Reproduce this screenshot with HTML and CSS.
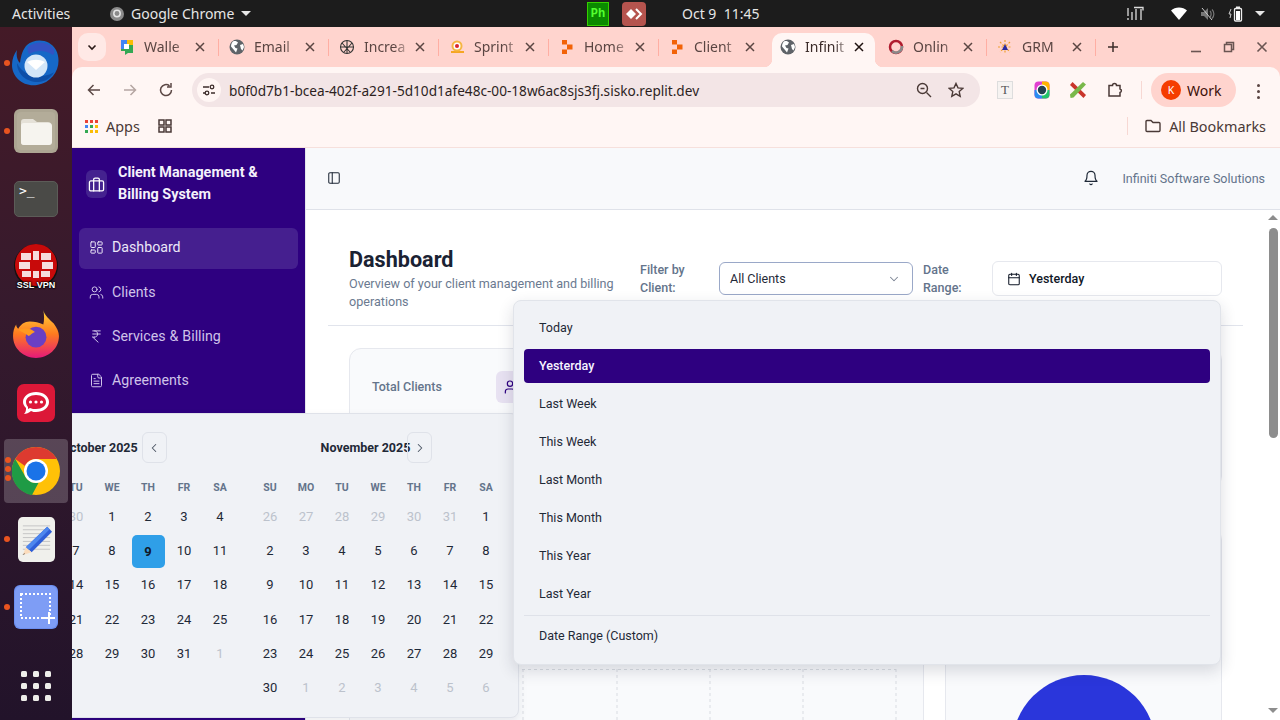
FILE: index.html
```html
<!DOCTYPE html>
<html lang="en">
<head>
<meta charset="utf-8">
<title>Client Management &amp; Billing System</title>
<link rel="stylesheet" href="styles.css">
</head>
<body>
<svg class="defs" width="0" height="0" aria-hidden="true">
  <symbol id="globe" viewBox="0 0 16 16"><circle cx="8" cy="8" r="7.5" fill="#5f6368"/><path d="M4 2.500c2-1 4 0 5 1L7.500 6 5 6.500 6.500 9l2 .5L7 13.500 5 11 2 7.500C2 5 3 3.500 4 2.500ZM11 6l3-1 1 3-1.500 3.500L12 10Z" fill="#fff"/></symbol>
  <symbol id="replit" viewBox="0 0 16 16"><path d="M3 1h5v4.500H3ZM8 5.500h5.500v5H8ZM3 10.500h5V15H3Z" fill="#f26207"/></symbol>
  <symbol id="close" viewBox="0 0 12 12"><path d="M2 2l8 8M10 2l-8 8" stroke="currentColor" stroke-width="1.500" fill="none"/></symbol>
</svg>
<div class="screen">
  <header class="topbar">
    <span class="tb-activities">Activities</span>
    <span class="tb-app">
      <svg class="i14" viewBox="0 0 14 14"><circle cx="7" cy="7" r="7" fill="#8a8a8a"/><circle cx="7" cy="6.500" r="3.200" fill="none" stroke="#e6e6e6" stroke-width="1.500"/></svg>
      Google Chrome
      <i class="caret"></i>
    </span>
    <span class="tb-ph">Ph</span>
    <span class="tb-any"><svg width="18" height="12" viewBox="0 0 18 12"><path d="M1 6l5-5 5 5-5 5Z" fill="#fff"/><path d="M11 1l5 5-5 5" fill="none" stroke="#fff" stroke-width="2"/></svg></span>
    <span class="tb-clock">Oct 9&nbsp;&nbsp;11:45</span>
    <span class="tb-tray">
      <svg width="18" height="16" viewBox="0 0 18 16"><path d="M2 2v8M2 12v2M6 6v8M10 3v11M15 3v11M8 1.500h9v3" fill="none" stroke="#ddd" stroke-width="1.300"/></svg>
      <svg class="tray-wifi" width="16" height="13" viewBox="0 0 16 13"><path d="M0 3.500C4-.5 12-.5 16 3.500L8 13Z" fill="#fff"/></svg>
      <svg width="15" height="14" viewBox="0 0 15 14"><path d="M1 5h3l4-4v12L4 9H1Z" fill="#777"/><path d="M10 4c1.500 1.500 1.500 4.500 0 6M12 2.500c2.500 2.500 2.500 6.500 0 9" fill="none" stroke="#777" stroke-width="1.200"/><path d="M2 1l10 12" stroke="#ccc" stroke-width="1"/></svg>
      <svg width="16" height="16" viewBox="0 0 16 16"><path d="M3 3L1 8h2l-1 4" fill="none" stroke="#ccc" stroke-width="1"/><rect x="6.500" y="2.500" width="7" height="12.500" rx="1" fill="none" stroke="#eee" stroke-width="1.300"/><rect x="8" y="0.500" width="4" height="2" fill="#eee"/><rect x="8" y="5" width="4" height="9" fill="#fff"/></svg>
      <i class="caret"></i>
    </span>
  </header>

  <div class="desk">
    <nav class="dock">
      <div class="dock-item has-dot">
        <svg class="dock-bird" viewBox="0 0 48 48"><path d="M15 6C23-1 38 0 44 11c7 14-1 32-19 35C11 48 0 38 0 26c0-6 2-11 5-15-1 5 0 10 3 13C9 16 11 10 15 6Z" fill="#1668c7"/><path d="M16 8c7-6 18-6 24 0 3 3 3 6 1 8-7-5-17-5-24-1-1-2-2-5-1-7Z" fill="#3353c4"/><path d="M5 24c0 11 9 19 21 19 7 0 13-4 16-10-8 6-29 8-37-9Z" fill="#0d4fa8"/><circle cx="24" cy="27" r="11.500" fill="#d3e6f8"/><path d="M15 23c6-3 12-3 18 0l-9 8Z" fill="#fff"/></svg>
      </div>
      <div class="dock-item has-dot">
        <svg class="dock-icon" viewBox="0 0 44 44"><rect width="44" height="44" rx="6" fill="#aca592"/><rect x="3" y="3" width="38" height="38" rx="4" fill="#b3ac99"/><path d="M7 13a3 3 0 0 1 3-3h9l4 3h11a3 3 0 0 1 3 3v17a3 3 0 0 1-3 3H10a3 3 0 0 1-3-3Z" fill="#e5e1d8"/><rect x="7" y="14" width="31" height="22" rx="3" fill="#f6f4ef"/></svg>
      </div>
      <div class="dock-item">
        <div class="term">&gt;_</div>
      </div>
      <div class="dock-item">
        <div class="vpn">
          <svg class="vpn-ball" viewBox="0 0 44 44"><circle cx="22" cy="22" r="22" fill="#111"/><circle cx="22" cy="21" r="21" fill="#c80a0a"/><path d="M7 9h10v7H7ZM19 7h6v9h-6ZM27 9h10v7H27ZM5 18h11v7H5ZM28 18h11v7H28ZM8 27h9v6H8ZM19 27h6v7h-6ZM27 27h9v6h-9Z" fill="#f6dcdc"/></svg>
          <span class="vpn-label">SSL VPN</span>
        </div>
      </div>
      <div class="dock-item">
        <svg class="dock-fox" viewBox="0 0 44 46"><defs><linearGradient id="ff" x1="0" y1="0" x2="0" y2="1"><stop offset="0" stop-color="#ffd43a"/><stop offset=".5" stop-color="#ff7a1f"/><stop offset="1" stop-color="#e5197a"/></linearGradient></defs><path d="M29 0c1 5 6 9 10 13 3 4 5 8 5 12 0 12-10 21-22 21S0 37 0 25c0-4 1-8 3-11 0 2 1 3 2 4 2-4 6-7 11-7 5 0 9 1 13 3 1-4 1-9 0-14Z" fill="url(#ff)"/><circle cx="22" cy="26" r="10" fill="#6a3fc4"/><path d="M5 19c5-2 12-2 16 2-3 1-4 3-6 4-4-3-7-4-10-6Z" fill="#ff9a1f"/></svg>
      </div>
      <div class="dock-item">
        <svg class="dock-rocket" viewBox="0 0 38 38"><rect width="38" height="38" rx="7" fill="#dc1838"/><path d="M6 18c0-6 6-10 13-10s13 4 13 10-6 10-13 10c-2 0-3 0-5-1-2 2-5 3-7 3 2-2 2-4 2-6-2-2-3-4-3-6Z" fill="#fff"/><path d="M9 18c0-4 4-7 10-7s10 3 10 7-4 7-10 7c-2 0-4 0-6-1l-2 1v-2c-1-1-2-3-2-5Z" fill="#dc1838"/><circle cx="13.500" cy="18" r="1.600" fill="#fff"/><circle cx="19" cy="18" r="1.600" fill="#fff"/><circle cx="24.500" cy="18" r="1.600" fill="#fff"/></svg>
      </div>
      <div class="dock-item is-running">
        <span class="dots"><i></i><i></i><i></i></span>
        <svg class="dock-chrome" viewBox="0 0 48 48"><circle cx="24" cy="24" r="24" fill="#ffc107"/><path d="M24 0a24 24 0 0 1 20.800 12H24a12 12 0 0 0-11 7L3.200 12A24 24 0 0 1 24 0Z" fill="#dd3a30"/><path d="M3.200 12l10.400 18a12 12 0 0 0 13 5.700L20 48A24 24 0 0 1 3.200 12Z" fill="#1f9b45"/><circle cx="24" cy="24" r="12" fill="#fff"/><circle cx="24" cy="24" r="9.500" fill="#1a73e8"/></svg>
      </div>
      <div class="dock-item has-dot">
        <svg class="dock-gedit" viewBox="0 0 38 46"><rect width="38" height="46" rx="5" fill="#f0f0ec"/><path d="M5 9h28M5 13h28M5 17h28M5 21h28M5 25h28M5 29h28M5 33h28" stroke="#c4c4c4"/><path d="M30 10l5 5-21 21-6-5Z" fill="#2f5fd8"/><path d="M30 10l2.500 2.500L11 34l-3-3Z" fill="#4d86ee"/><path d="M8 31l6 5-9 3Z" fill="#fbdcbc"/><path d="M6.500 37l-2 2 2.500-1Z" fill="#333"/></svg>
      </div>
      <div class="dock-item has-dot">
        <svg class="dock-icon" viewBox="0 0 44 44"><rect width="44" height="44" rx="6" fill="#6c8ff0"/><rect x="1" y="1" width="42" height="42" rx="6" fill="#7e9df5"/><rect x="7" y="9" width="29" height="24" fill="none" stroke="#fff" stroke-width="2" stroke-dasharray="2 2"/><path d="M35 27v12M29 33h12" stroke="#fff" stroke-width="2"/></svg>
      </div>
      <div class="dock-grid"><i></i><i></i><i></i><i></i><i></i><i></i><i></i><i></i><i></i></div>
    </nav>

    <div class="browser">
      <div class="tabstrip">
        <button class="tab-menu"><svg class="i12" viewBox="0 0 12 12"><path d="M2.500 4.500L6 8l3.500-3.500" fill="none" stroke="#2a1a18" stroke-width="1.600"/></svg></button>
        <div class="tab sep">
          <svg class="favicon" viewBox="0 0 16 16"><path d="M2 1h6v4H5v5H2Z" fill="#4285f4"/><path d="M8 1h6v5h-4V5H8Z" fill="#fbbc04"/><path d="M14 6v8H9l-3 2v-4H2v-2h8V6Z" fill="#34a853"/><rect x="5" y="5" width="5" height="5" fill="#fff"/></svg>
          <span class="tab-title">Walle</span>
          <svg class="tab-x" viewBox="0 0 12 12"><use href="#close"/></svg>
        </div>
        <div class="tab sep">
          <svg class="favicon" viewBox="0 0 16 16"><use href="#globe"/></svg>
          <span class="tab-title">Email</span>
          <svg class="tab-x" viewBox="0 0 12 12"><use href="#close"/></svg>
        </div>
        <div class="tab sep">
          <svg class="favicon" viewBox="0 0 16 16"><g fill="none" stroke="#333" stroke-width="1.100"><circle cx="8" cy="8" r="6.500"/><path d="M3 4l8 9M13 4L5 13M1.500 8h13M8 1.500v13"/></g></svg>
          <span class="tab-title">Increa</span>
          <svg class="tab-x" viewBox="0 0 12 12"><use href="#close"/></svg>
        </div>
        <div class="tab sep">
          <svg class="favicon" viewBox="0 0 16 16"><path d="M2 13h13" stroke="#f5a623" stroke-width="2"/><circle cx="8" cy="7" r="5.500" fill="#f5b642"/><circle cx="8" cy="7" r="3.500" fill="#fff"/><circle cx="8" cy="7" r="2" fill="#d9262c"/></svg>
          <span class="tab-title">Sprint</span>
          <svg class="tab-x" viewBox="0 0 12 12"><use href="#close"/></svg>
        </div>
        <div class="tab sep">
          <svg class="favicon" viewBox="0 0 16 16"><use href="#replit"/></svg>
          <span class="tab-title">Home</span>
          <svg class="tab-x" viewBox="0 0 12 12"><use href="#close"/></svg>
        </div>
        <div class="tab">
          <svg class="favicon" viewBox="0 0 16 16"><use href="#replit"/></svg>
          <span class="tab-title">Client</span>
          <svg class="tab-x" viewBox="0 0 12 12"><use href="#close"/></svg>
        </div>
        <div class="tab tab-active">
          <svg class="favicon" viewBox="0 0 16 16"><use href="#globe"/></svg>
          <span class="tab-title">Infinit</span>
          <svg class="tab-x" viewBox="0 0 12 12"><use href="#close"/></svg>
        </div>
        <div class="tab tab-narrow sep">
          <svg class="favicon" viewBox="0 0 16 16"><circle cx="8" cy="8" r="6" fill="none" stroke="#b01c2e" stroke-width="2.500"/><path d="M4 12a6 6 0 0 0 10-5" fill="none" stroke="#8a8a8a" stroke-width="2.500"/></svg>
          <span class="tab-title">Onlin</span>
          <svg class="tab-x" viewBox="0 0 12 12"><use href="#close"/></svg>
        </div>
        <div class="tab tab-narrow sep">
          <svg class="favicon" viewBox="0 0 16 16"><path d="M8 1v14M1 8h14M3 3l10 10M13 3L3 13" stroke="#f0a030" stroke-width="1.200" stroke-dasharray="2 1.500"/><path d="M8 5l3 6H5Z" fill="#2b2ba0"/></svg>
          <span class="tab-title">GRM</span>
          <svg class="tab-x" viewBox="0 0 12 12"><use href="#close"/></svg>
        </div>
        <svg class="tab-plus" viewBox="0 0 12 12"><path d="M6 1v10M1 6h10" stroke="#3d2c2a" stroke-width="1.500"/></svg>
        <div class="winctl">
          <svg class="i12" viewBox="0 0 12 12"><path d="M1 10.500h10" stroke="#6a5552" stroke-width="1.600"/></svg>
          <svg class="i12" viewBox="0 0 12 12"><path d="M3.500 3V1.500h7v7H9M1.500 3.500h7v7h-7Z" fill="none" stroke="#6a5552" stroke-width="1.500"/></svg>
          <svg class="i12" viewBox="0 0 12 12"><path d="M1.500 1.500l9 9M10.500 1.500l-9 9" stroke="#6a5552" stroke-width="1.600"/></svg>
        </div>
      </div>

      <div class="toolbar">
        <svg class="tool" viewBox="0 0 16 16"><path d="M14 8H2.500M7.500 3l-5 5 5 5" fill="none" stroke="#5c4845" stroke-width="1.500"/></svg>
        <svg class="tool" viewBox="0 0 16 16"><path d="M2 8h11.500M8.500 3l5 5-5 5" fill="none" stroke="#b5a5a2" stroke-width="1.500"/></svg>
        <svg class="tool" viewBox="0 0 16 16"><path d="M13.500 8A5.500 5.500 0 1 1 11.500 3.800M13 1v4H9" fill="none" stroke="#5c4845" stroke-width="1.500"/></svg>
        <div class="omnibox">
          <span class="site-info"><svg class="i14" viewBox="0 0 14 14"><path d="M1 4h6M9 10h4M1 10h2" stroke="#3d2c2a" stroke-width="1.400"/><circle cx="10" cy="4" r="1.800" fill="none" stroke="#3d2c2a" stroke-width="1.300"/><circle cx="5" cy="10" r="1.800" fill="none" stroke="#3d2c2a" stroke-width="1.300"/></svg></span>
          <span class="url">b0f0d7b1-bcea-402f-a291-5d10d1afe48c-00-18w6ac8sjs3fj.sisko.replit.dev</span>
          <svg class="omni-zoom" viewBox="0 0 16 16"><circle cx="6.500" cy="6.500" r="5" fill="none" stroke="#4a3936" stroke-width="1.400"/><path d="M10.500 10.500l4.500 4.500M4.500 6.500h4" stroke="#4a3936" stroke-width="1.400"/></svg>
          <svg class="omni-star" viewBox="0 0 16 16"><path d="M8 1.500l2 4.400 4.800.5-3.600 3.200 1 4.700L8 11.900l-4.200 2.400 1-4.700L1.200 6.400 6 5.900Z" fill="none" stroke="#4a3936" stroke-width="1.400"/></svg>
        </div>
        <div class="exts">
          <span class="ext-t">T</span>
          <svg class="ext-ring" viewBox="0 0 16 18"><rect x="0.500" y="0.500" width="15" height="17" rx="4" fill="#e13fd0"/><path d="M8 .5h3.500a4 4 0 0 1 4 4V9H8Z" fill="#ffb400"/><path d="M15.500 9v4.500a4 4 0 0 1-4 4H8V9Z" fill="#21c46a"/><path d="M8 17.500H4.500a4 4 0 0 1-4-4V9H8Z" fill="#2a8cf0"/><circle cx="8" cy="9" r="5.500" fill="#fff"/><circle cx="8" cy="9" r="4.200" fill="#23404f"/></svg>
          <svg class="i16" viewBox="0 0 16 16"><path d="M2.500 0L16 13l-2.500 3L0 3Z" fill="#c9352b"/><path d="M13 0L16 2.500 3.500 15.500.5 16 0 12.500Z" fill="#79b84a"/></svg>
          <svg class="i16" viewBox="0 0 16 16"><path d="M2 3.500h3.500a2 2 0 0 1 4 0H13v3.500a1.800 1.800 0 0 1 0 3.500V14H2Z" fill="none" stroke="#4a3936" stroke-width="1.500"/></svg>
        </div>
        <span class="tool-sep"></span>
        <div class="profile"><span class="avatar">K</span><span class="profile-name">Work</span></div>
        <span class="kebab"><i></i><i></i><i></i></span>
      </div>

      <div class="bookmarks">
        <span class="apps-grid"><i class="r"></i><i class="r"></i><i class="r"></i><i class="b"></i><i class="g"></i><i class="y"></i><i class="g"></i><i class="y"></i><i class="y"></i></span>
        <span class="bm-text">Apps</span>
        <svg class="bm-groups" viewBox="0 0 14 14"><path d="M1 1h5v5H1ZM8 1h5v5H8ZM1 8h5v5H1ZM8 8h5v5H8Z" fill="none" stroke="#4a3936" stroke-width="1.500"/></svg>
        <span class="bm-sep"></span>
        <svg class="bm-folder" viewBox="0 0 16 14"><path d="M1 2.500a1 1 0 0 1 1-1h4l2 2h6a1 1 0 0 1 1 1v7a1 1 0 0 1-1 1H2a1 1 0 0 1-1-1Z" fill="none" stroke="#4a3936" stroke-width="1.400"/></svg>
        <span class="bm-text">All Bookmarks</span>
      </div>

      <div class="app">
        <aside class="sidebar">
          <div class="brand">
            <span class="brand-icon"><svg class="lucide l17" viewBox="0 0 24 24"><rect x="2" y="7" width="20" height="14" rx="2"/><path d="M16 21V5a2 2 0 0 0-2-2h-4a2 2 0 0 0-2 2v16"/></svg></span>
            <span class="brand-name">Client Management &amp; Billing System</span>
          </div>
          <a class="nav-item nav-active"><svg class="lucide nav-icon" viewBox="0 0 24 24"><rect x="3" y="3" width="7" height="9" rx="1"/><rect x="14" y="3" width="7" height="5" rx="1"/><rect x="14" y="12" width="7" height="9" rx="1"/><rect x="3" y="16" width="7" height="5" rx="1"/></svg>Dashboard</a>
          <a class="nav-item"><svg class="lucide nav-icon" viewBox="0 0 24 24"><path d="M16 21v-2a4 4 0 0 0-4-4H6a4 4 0 0 0-4 4v2"/><circle cx="9" cy="7" r="4"/><path d="M22 21v-2a4 4 0 0 0-3-3.870"/><path d="M16 3.130a4 4 0 0 1 0 7.750"/></svg>Clients</a>
          <a class="nav-item"><svg class="lucide nav-icon" viewBox="0 0 24 24"><path d="M6 3h12M6 8h12M6 13l8.500 8M6 13h3M9 13c6.667 0 6.667-10 0-10"/></svg>Services &amp; Billing</a>
          <a class="nav-item"><svg class="lucide nav-icon" viewBox="0 0 24 24"><path d="M15 2H6a2 2 0 0 0-2 2v16a2 2 0 0 0 2 2h12a2 2 0 0 0 2-2V7Z"/><path d="M14 2v4a2 2 0 0 0 2 2h4M10 9H8M16 13H8M16 17H8"/></svg>Agreements</a>
        </aside>
        <div class="main">
          <div class="app-head">
            <svg class="lucide l14 head-panel" viewBox="0 0 24 24"><rect x="3" y="3" width="18" height="18" rx="2"/><path d="M9 3v18"/></svg>
            <svg class="lucide l16 head-bell" viewBox="0 0 24 24"><path d="M6 8a6 6 0 0 1 12 0c0 7 3 9 3 9H3s3-2 3-9"/><path d="M10.300 21a1.940 1.940 0 0 0 3.400 0"/></svg>
            <span class="head-org">Infiniti Software Solutions</span>
          </div>
          <div class="content">
            <div class="page">
              <div class="page-head">
                <div class="page-title">
                  <h1>Dashboard</h1>
                  <p>Overview of your client management and billing operations</p>
                </div>
                <div class="filters">
                  <label class="filter-label l-client">Filter by Client:</label>
                  <div class="select">All Clients<svg class="lucide l14 sel-chev" viewBox="0 0 24 24"><path d="m6 9 6 6 6-6"/></svg></div>
                  <label class="filter-label l-date">Date Range:</label>
                  <div class="date-btn"><svg class="lucide l14" viewBox="0 0 24 24"><path d="M8 2v4M16 2v4M3 10h18"/><rect x="3" y="4" width="18" height="18" rx="2"/></svg>Yesterday</div>
                </div>
              </div>
              <div class="page-body">
                <div class="stats">
                  <div class="card stat">
                    <span class="stat-label">Total Clients</span>
                    <span class="stat-icon"><svg class="lucide l16" viewBox="0 0 24 24"><path d="M16 21v-2a4 4 0 0 0-4-4H6a4 4 0 0 0-4 4v2"/><circle cx="9" cy="7" r="4"/></svg></span>
                  </div>
                  <div class="card stat"></div>
                  <div class="card stat"></div>
                  <div class="card stat"></div>
                </div>
                <div class="charts">
                  <div class="card chart">
                    <svg class="chart-grid" viewBox="0 0 530 120"><path d="M151 0v120M245 0v120M338 0v120M431 0v120M524 0v120M60 .5h464" fill="none" stroke="#d9dce2" stroke-dasharray="3 3"/></svg>
                  </div>
                  <div class="card pie">
                    <svg class="pie-svg" viewBox="0 0 144 144"><circle cx="72" cy="72" r="72" fill="#2a36db"/></svg>
                  </div>
                </div>
              </div>
            </div>
            <div class="scrollbar">
              <i class="sb-up"></i>
              <i class="sb-thumb"></i>
              <i class="sb-down"></i>
            </div>
          </div>
        </div>
      </div>
    </div>
  </div>

  <div class="calendar">
    <section class="month">
      <div class="month-head mh-oct">
        <span class="month-name">October 2025</span>
        <span class="month-nav"><svg class="lucide l14" viewBox="0 0 24 24"><path d="m15 18-6-6 6-6"/></svg></span>
      </div>
      <div class="weekdays"><span>SU</span><span>MO</span><span>TU</span><span>WE</span><span>TH</span><span>FR</span><span>SA</span></div>
      <div class="days">
        <span class="out">28</span><span class="out">29</span><span class="out">30</span><span>1</span><span>2</span><span>3</span><span>4</span>
        <span>5</span><span>6</span><span>7</span><span>8</span><span class="today">9</span><span>10</span><span>11</span>
        <span>12</span><span>13</span><span>14</span><span>15</span><span>16</span><span>17</span><span>18</span>
        <span>19</span><span>20</span><span>21</span><span>22</span><span>23</span><span>24</span><span>25</span>
        <span>26</span><span>27</span><span>28</span><span>29</span><span>30</span><span>31</span><span class="out">1</span>
      </div>
    </section>
    <section class="month">
      <div class="month-head mh-nov">
        <span class="month-name">November 2025</span>
        <span class="month-nav nav-over"><svg class="lucide l14" viewBox="0 0 24 24"><path d="m9 18 6-6-6-6"/></svg></span>
      </div>
      <div class="weekdays"><span>SU</span><span>MO</span><span>TU</span><span>WE</span><span>TH</span><span>FR</span><span>SA</span></div>
      <div class="days">
        <span class="out">26</span><span class="out">27</span><span class="out">28</span><span class="out">29</span><span class="out">30</span><span class="out">31</span><span>1</span>
        <span>2</span><span>3</span><span>4</span><span>5</span><span>6</span><span>7</span><span>8</span>
        <span>9</span><span>10</span><span>11</span><span>12</span><span>13</span><span>14</span><span>15</span>
        <span>16</span><span>17</span><span>18</span><span>19</span><span>20</span><span>21</span><span>22</span>
        <span>23</span><span>24</span><span>25</span><span>26</span><span>27</span><span>28</span><span>29</span>
        <span>30</span><span class="out">1</span><span class="out">2</span><span class="out">3</span><span class="out">4</span><span class="out">5</span><span class="out">6</span>
      </div>
    </section>
  </div>

  <div class="range-menu">
    <div class="range-item">Today</div>
    <div class="range-item range-selected">Yesterday</div>
    <div class="range-item">Last Week</div>
    <div class="range-item">This Week</div>
    <div class="range-item">Last Month</div>
    <div class="range-item">This Month</div>
    <div class="range-item">This Year</div>
    <div class="range-item">Last Year</div>
    <div class="range-sep"></div>
    <div class="range-item range-last">Date Range (Custom)</div>
  </div>
</div>
</body>
</html>
```

FILE: styles.css
```css
* { box-sizing: border-box; }
html, body { margin: 0; height: 100%; overflow: hidden; }
body { font-family: Roboto, "Liberation Sans", sans-serif; background: #fff; color: #1f2937; }
.defs { position: absolute; }
i { display: block; }
button { border: 0; padding: 0; }

.screen { position: relative; width: 1280px; height: 720px; display: flex; flex-direction: column; overflow: hidden; }

.i12 { width: 12px; height: 12px; display: block; flex: none; }
.i14 { width: 14px; height: 14px; display: block; flex: none; }
.i16 { width: 16px; height: 16px; display: block; flex: none; }
.lucide { fill: none; stroke: currentColor; stroke-width: 1.800; stroke-linecap: round; stroke-linejoin: round; display: block; flex: none; }
.l14 { width: 14px; height: 14px; }
.l16 { width: 16px; height: 16px; }
.l17 { width: 17px; height: 17px; }

/* Top bar */
.topbar { height: 27px; flex: none; background: #1c1c1c; color: #e6e6e6; display: flex; align-items: center; font: 14px "Noto Sans", sans-serif; position: relative; z-index: 4; }
.tb-activities { margin-left: 12px; width: 98px; }
.tb-app { display: flex; align-items: center; gap: 7px; width: 477px; }
.caret { width: 0; height: 0; border-left: 5px solid transparent; border-right: 5px solid transparent; border-top: 5px solid #e6e6e6; }
.tb-ph { width: 22px; height: 24px; background: #0b8a00; border: 1px solid #35d000; color: #54ff30; font: 700 12px/22px "Liberation Mono", monospace; text-align: center; margin-right: 13px; }
.tb-any { width: 24px; height: 24px; border-radius: 4px; background: #b5544e; display: flex; align-items: center; justify-content: center; margin-right: 36px; }
.tb-clock { width: 82px; font-size: 14px; }
.tb-tray { margin-left: auto; display: flex; align-items: center; gap: 13px; margin-right: 15px; }
.tb-tray .caret { margin-left: -2px; }
.tray-wifi { margin-left: 14px; }

/* Dock */
.desk { flex: 1; min-height: 0; display: flex; }
.dock { position: relative; z-index: 3; width: 72px; flex: none; padding-top: 2px; background: linear-gradient(180deg, #441a27 0%, #361a2d 40%, #22132a 100%); }
.dock-item { position: relative; height: 68px; display: flex; align-items: center; justify-content: center; }
.has-dot::before { content: ""; position: absolute; left: 4px; top: 31px; width: 6px; height: 6px; border-radius: 50%; background: #e95420; }
.dock-icon { width: 44px; height: 44px; display: block; }
.dock-bird { width: 48px; height: 48px; display: block; }
.dock-fox { width: 46px; height: 48px; display: block; margin-top: -2px; }
.dock-rocket { width: 38px; height: 38px; display: block; }
.dock-gedit { width: 37px; height: 45px; display: block; }
.dock-chrome { width: 48px; height: 48px; display: block; }
.term { width: 44px; height: 36px; background: #4a4a47; border-radius: 5px; border: 1px solid #5c5c58; color: #fff; font: 13px/18px "DejaVu Sans Mono", monospace; padding-left: 4px; }
.vpn { position: relative; width: 46px; height: 46px; }
.vpn-ball { width: 44px; height: 44px; display: block; margin: 0 auto; }
.vpn-label { position: absolute; left: 0; right: 0; bottom: 0; text-align: center; font: 700 9px/10px "Liberation Sans", sans-serif; color: #fff; text-shadow: 0 0 2px #000, 0 0 2px #000, 0 0 2px #000; white-space: nowrap; }
.is-running { margin: 2px 4px; background: rgba(255, 255, 255, .2); border-radius: 4px; height: 64px; }
.dots { position: absolute; left: 1px; top: 18px; display: flex; flex-direction: column; gap: 3px; }
.dots i { width: 6px; height: 6px; border-radius: 50%; background: #e95420; }
.dock-grid { margin: 30px auto 0; width: 30px; display: grid; grid-template-columns: repeat(3, 6px); gap: 6px; justify-content: space-between; }
.dock-grid i { width: 6px; height: 6px; border-radius: 1.500px; background: #eeeeea; }

/* Browser chrome */
.browser { flex: 1; min-width: 0; display: flex; flex-direction: column; background: #ffd4ce; }
.tabstrip { height: 40px; flex: none; display: flex; align-items: flex-start; padding: 6px 0 0 6px; color: #5a4542; font: 14px "Noto Sans", sans-serif; }
.tab-menu { width: 28px; height: 28px; border-radius: 10px; background: #ffe9e6; display: flex; align-items: center; justify-content: center; margin-right: 3px; }
.tab { position: relative; width: 110px; height: 34px; flex: none; display: flex; align-items: center; padding: 0 13px 7px 10px; }
.tab-narrow { width: 109px; }
.tab.sep::after { content: ""; position: absolute; right: 0; top: 6px; width: 1.500px; height: 17px; background: #ffaea3; }
.favicon { width: 16px; height: 16px; flex: none; margin-right: 9px; }
.tab-title { flex: 1; min-width: 0; white-space: nowrap; -webkit-mask-image: linear-gradient(90deg, #000 60%, rgba(0, 0, 0, .25) 88%); mask-image: linear-gradient(90deg, #000 60%, rgba(0, 0, 0, .25) 88%); }
.tab-x { width: 12px; height: 12px; flex: none; color: #5a4542; }
.tab-active { width: 103px; margin: 0 3px; padding: 0 10px 7px 8px; background: #fff6f4; border-radius: 10px 10px 0 0; color: #3a2a28; }
.tab-active .tab-x { color: #1f1210; }
.tab-active::before, .tab-active::after { content: ""; position: absolute; bottom: 0; width: 8px; height: 8px; }
.tab-active::before { left: -8px; background: radial-gradient(circle at 0 0, transparent 8px, #fff6f4 8.500px); }
.tab-active::after { right: -8px; background: radial-gradient(circle at 100% 0, transparent 8px, #fff6f4 8.500px); }
.tab-plus { width: 12px; height: 12px; margin: 8px 0 0 11px; flex: none; }
.winctl { margin-left: auto; display: flex; gap: 21px; margin-right: 12px; margin-top: 8px; }

.toolbar { height: 40px; flex: none; background: #fff6f4; border-radius: 10px 10px 0 0; display: flex; align-items: flex-start; padding: 6px 0 0 14px; }
.tool { width: 16px; height: 16px; flex: none; margin: 9px 20px 0 0; display: block; }
.tool + .omnibox { margin-left: -2px; }
.omnibox { width: 788px; height: 34px; border-radius: 17px; background: #f3e5e6; display: flex; align-items: center; padding: 0 16px 0 5px; flex: none; }
.site-info { width: 24px; height: 24px; border-radius: 50%; background: #fff6f4; display: flex; align-items: center; justify-content: center; margin-right: 8px; flex: none; }
.url { flex: 1; font: 13.630px "Noto Sans", sans-serif; color: #2d1f1e; white-space: nowrap; }
.omni-zoom, .omni-star { width: 16px; height: 16px; flex: none; }
.omni-star { margin-left: 16px; }
.exts { display: flex; align-items: center; gap: 20.500px; height: 34px; margin-left: 17px; flex: none; }
.ext-t { width: 16px; height: 18px; background: #f6f3f1; border: 1px solid #ddd; color: #555; font: 13px/16px "Liberation Serif", serif; text-align: center; }
.ext-ring { width: 16px; height: 18px; display: block; flex: none; }
.tool-sep { width: 1.500px; height: 18px; margin: 8px 9px 0 18px; background: #f7d8d3; flex: none; }
.profile { width: 85px; height: 34px; border-radius: 17px; background: #ffd4ce; display: flex; align-items: center; flex: none; }
.avatar { width: 20px; height: 20px; border-radius: 50%; background: #f53c00; color: #fff; font: 10.500px/20px "Noto Sans", sans-serif; text-align: center; margin: 0 6px 0 10px; flex: none; }
.profile-name { font: 14px "Noto Sans", sans-serif; color: #3d0f08; }
.kebab { display: flex; flex-direction: column; gap: 3px; margin: 11px 0 0 21px; }
.kebab i { width: 3px; height: 3px; border-radius: 50%; background: #5a4542; }

.bookmarks { height: 41px; flex: none; background: #fff6f4; border-bottom: 1px solid #f6e0dc; display: flex; align-items: center; padding: 0 0 2px 13px; color: #4a3936; font: 14.400px "Noto Sans", sans-serif; }
.apps-grid { display: grid; grid-template-columns: repeat(3, 3px); gap: 2px; margin-right: 8px; }
.apps-grid i { width: 3px; height: 3px; }
.apps-grid .r { background: #ea4335; }
.apps-grid .b { background: #4285f4; }
.apps-grid .g { background: #34a853; }
.apps-grid .y { background: #fbbc04; }
.bm-groups { width: 14px; height: 14px; margin-left: 18px; flex: none; }
.bm-sep { width: 1.500px; height: 18px; background: #f7d8d3; margin-left: auto; margin-right: 17px; }
.bm-folder { width: 16px; height: 14px; margin-right: 8px; flex: none; }
.bookmarks .bm-text:last-child { margin-right: 14px; }

/* App */
.app { flex: 1; min-height: 0; display: flex; background: #fff; }
.sidebar { width: 234px; flex: none; background: #2e0080; border-right: 1px solid #e4e6ec; }
.brand { display: flex; align-items: center; gap: 11px; padding: 14px 14px 22px; }
.brand-icon { width: 21px; height: 28px; border-radius: 6px; background: #44228f; color: #fff; display: flex; align-items: center; justify-content: center; flex: none; }
.brand-name { font-size: 14.400px; line-height: 22px; font-weight: 700; color: #f4f1fb; }
.nav-item { display: flex; align-items: center; gap: 8px; height: 40px; margin: 0 7px 4px; padding-left: 10px; border-radius: 6px; color: #cfc3e9; font-size: 14.200px; word-spacing: .5px; }
.nav-icon { width: 15px; height: 15px; stroke-width: 1.600; }
.nav-active { height: 41px; padding-bottom: 3px; margin-bottom: 3px; background: #451f8f; color: #ece7f7; }

.main { flex: 1; min-width: 0; display: flex; flex-direction: column; }
.app-head { height: 62px; flex: none; display: flex; align-items: center; background: #f8f9fb; border-bottom: 1px solid #dfe2e9; padding: 0 15px 0 21px; color: #1f2937; }
.head-panel { margin-right: auto; margin-bottom: 1px; }
.head-bell { margin-right: 23px; margin-bottom: 1px; }
.head-org { font-size: 12.500px; color: #64748b; }

.content { flex: 1; min-height: 0; display: flex; overflow: hidden; }
.page { flex: 1; min-width: 0; padding: 35px 23px 0 22px; }
.page-head { display: flex; padding: 0 21px 15px; height: 81px; border-bottom: 1px solid #e1e4ec; }
.page-title { width: 291px; flex: none; padding-right: 20px; padding-top: 1px; }
.page-title h1 { margin: 0 0 1px; font-size: 21.600px; line-height: 28px; font-weight: 700; color: #1a2233; }
.page-title p { margin: 0; font-size: 12.600px; line-height: 18px; color: #6b7a90; }
.filters { display: flex; align-items: center; height: 35px; margin-top: 16px; flex: none; }
.filter-label { font-size: 12.500px; line-height: 17.500px; font-weight: 500; color: #64748b; }
.l-client { width: 79px; padding-right: 12px; }
.l-date { width: 69px; padding-right: 12px; margin-left: 10px; }
.select { width: 194px; height: 33px; display: flex; align-items: center; justify-content: space-between; padding: 0 11px 0 10px; border: 1px solid #9aa8c8; border-radius: 6px; background: #fff; font-size: 12.500px; color: #1f2937; }
.sel-chev { color: #7b8494; }
.date-btn { width: 230px; height: 35px; display: flex; align-items: center; gap: 8px; padding-left: 14px; border: 1px solid #e6e8ee; border-radius: 6px; background: #fff; font-size: 12.500px; font-weight: 500; color: #111827; }

.page-body { padding: 0 21px; }
.card { background: #f9fafc; border: 1px solid #e6e8ee; border-radius: 12px; }
.stats { display: grid; grid-template-columns: repeat(4, 1fr); gap: 23px; margin-top: 22px; }
.stat { height: 140px; display: flex; justify-content: space-between; align-items: flex-start; padding: 22px 21px 22px 22px; }
.stat-label { font-size: 12.500px; line-height: 32px; font-weight: 500; color: #64748b; }
.stat-icon { width: 32px; height: 32px; border-radius: 6px; background: #e8e2f2; color: #2e0080; display: flex; align-items: center; justify-content: center; }
.charts { display: grid; grid-template-columns: 575px 277px; gap: 21px; margin-top: 40px; }
.chart { height: 320px; padding: 140px 0 0 22px; }
.chart-grid { display: block; width: 530px; height: 120px; }
.pie { height: 320px; padding-top: 146px; display: flex; justify-content: center; }
.pie-svg { width: 144px; height: 144px; display: block; }

.scrollbar { width: 14px; flex: none; display: flex; flex-direction: column; align-items: center; background: #fff; padding: 5px 0 7px; }
.sb-up, .sb-down { width: 0; height: 0; border-left: 5px solid transparent; border-right: 5px solid transparent; }
.sb-up { border-bottom: 5px solid #8d8d8d; }
.sb-down { border-top: 5px solid #8d8d8d; margin-top: auto; }
.sb-thumb { width: 9px; height: 210px; margin-top: 8px; border-radius: 5px; background: #8d8d8d; }

/* Overlays */
.calendar { position: absolute; left: -31px; top: 413px; width: 550px; height: 305px; z-index: 2; display: flex; gap: 14px; padding: 18px 14px 0 16px; background: #f0f2f6; border: 1px solid #dfe2e9; border-radius: 8px; box-shadow: 0 4px 10px rgba(30, 40, 60, .08); }
.month { width: 252px; flex: none; }
.month-head { display: flex; align-items: center; justify-content: center; height: 31px; gap: 4px; }
.mh-oct { padding-left: 4px; }
.mh-nov { padding-right: 3px; }
.month-name { font-size: 12.500px; font-weight: 700; color: #1f2937; white-space: nowrap; }
.month-nav { width: 25px; height: 31px; border: 1px solid #dfe2e9; border-radius: 6px; display: flex; align-items: center; justify-content: center; color: #4b5563; flex: none; }
.nav-over { margin-left: -7px; }
.weekdays, .days { display: grid; grid-template-columns: repeat(7, 36px); text-align: center; }
.weekdays { height: 22px; line-height: 22px; margin: 14px 0 1px; font-size: 10.500px; font-weight: 700; color: #64748b; }
.days { grid-auto-rows: 34.200px; font-size: 13px; line-height: 34px; color: #1f2937; }
.days .out { color: #bcc2cc; }
.days .today { width: 33px; height: 33px; line-height: 33px; margin: 1px auto 0; border-radius: 5px; background: #2f9fe8; font-weight: 700; color: #111827; }

.range-menu { position: absolute; left: 513px; top: 300px; width: 708px; height: 365px; z-index: 2; padding: 10px; background: #f0f2f6; border: 1px solid #e1e4ea; border-radius: 8px; box-shadow: 0 6px 16px rgba(30, 40, 60, .16); }
.range-item { height: 34px; margin-bottom: 4px; padding-left: 15px; border-radius: 4px; font-size: 12.500px; font-weight: 450; line-height: 34px; color: #1f2937; }
.range-selected { background: #2e0080; color: #f7f4ff; font-weight: 500; }
.range-sep { height: 1px; margin: 4px 0 3px; background: #dfe2e9; }
.range-last { margin-bottom: 0; }
```
